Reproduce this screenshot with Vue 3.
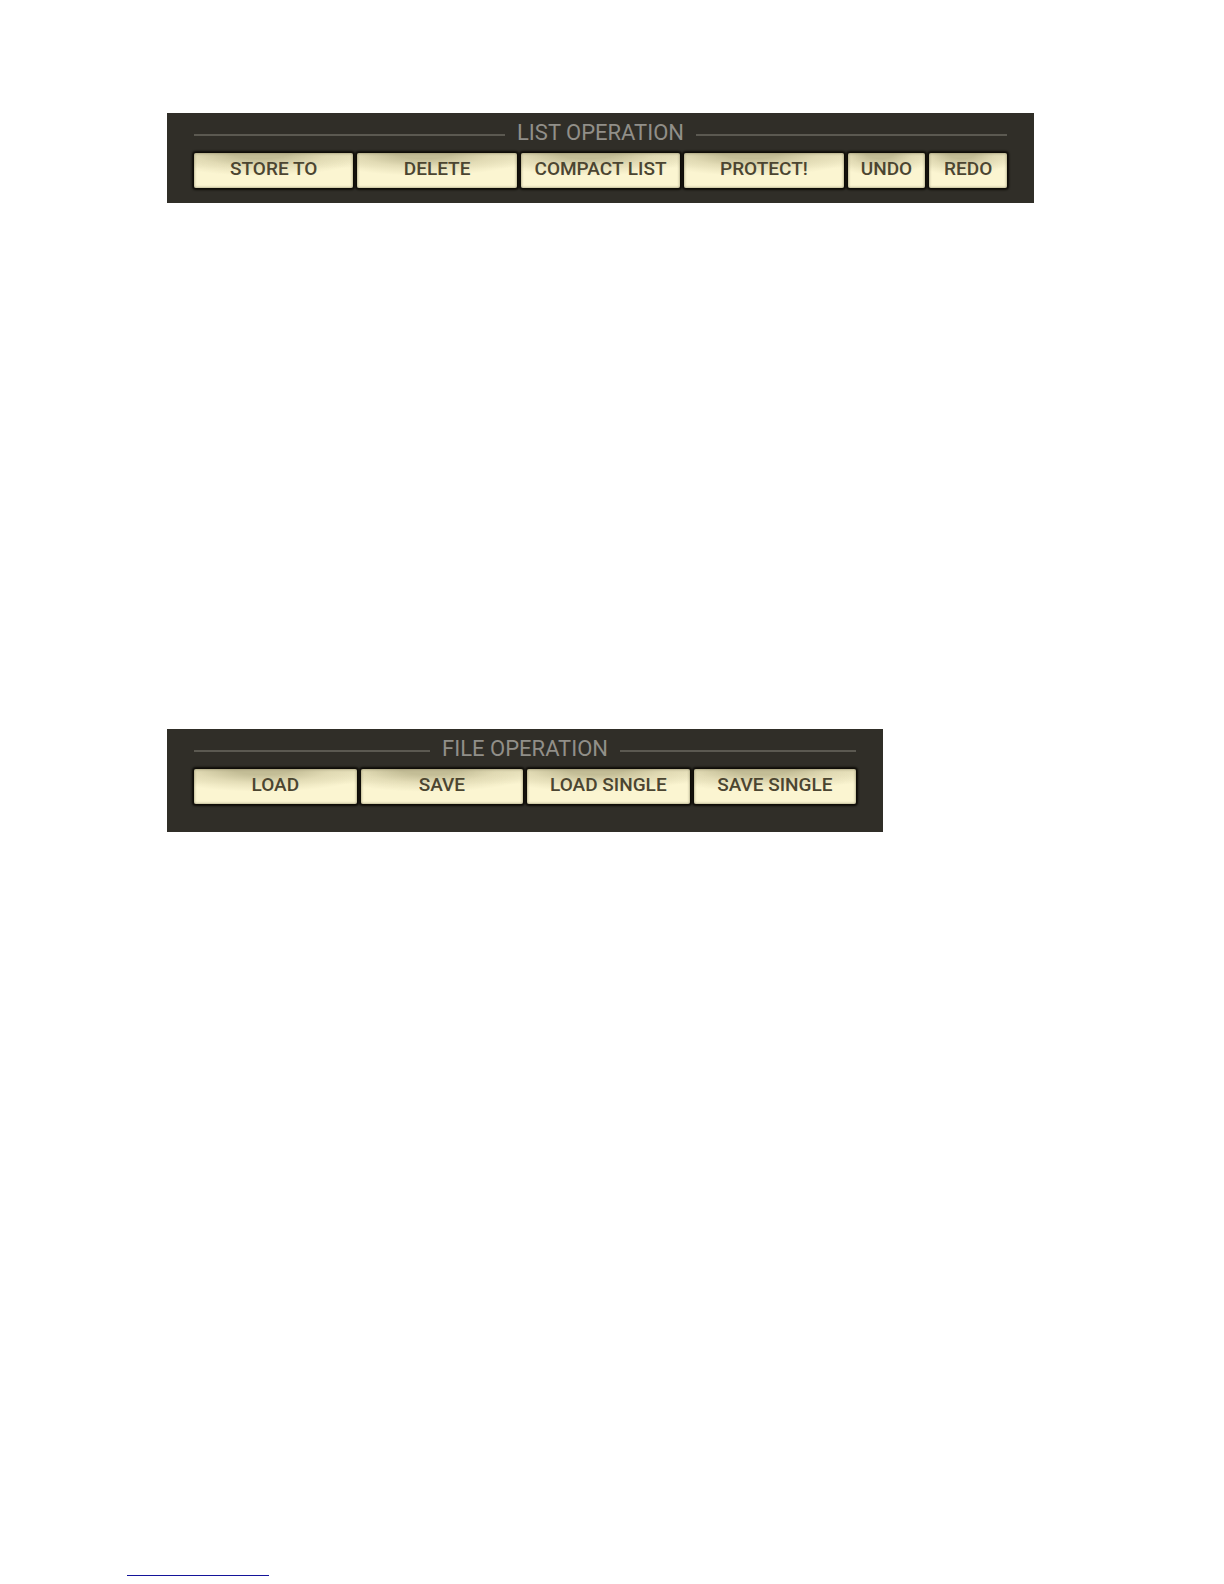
<template>
  <main class="page">
    <section
      v-for="panel in panels"
      :key="panel.id"
      class="panel"
      :class="panel.id"
      :aria-labelledby="`${panel.id}-title`"
    >
      <header class="panel-header">
        <span class="rule" aria-hidden="true"></span>
        <h2 :id="`${panel.id}-title`">{{ panel.title }}</h2>
        <span class="rule" aria-hidden="true"></span>
      </header>
      <div class="button-row">
        <button
          v-for="action in panel.actions"
          :key="action.label"
          type="button"
          class="key"
          :class="{ small: action.small }"
        >
          {{ action.label }}
        </button>
      </div>
    </section>

    <footer class="page-footer">
      <div class="footer-line"></div>
    </footer>
  </main>
</template>

<script setup>
const panels = [
  {
    id: 'list-operation',
    title: 'LIST OPERATION',
    actions: [
      { label: 'STORE TO' },
      { label: 'DELETE' },
      { label: 'COMPACT LIST' },
      { label: 'PROTECT!' },
      { label: 'UNDO', small: true },
      { label: 'REDO', small: true },
    ],
  },
  {
    id: 'file-operation',
    title: 'FILE OPERATION',
    actions: [
      { label: 'LOAD' },
      { label: 'SAVE' },
      { label: 'LOAD SINGLE' },
      { label: 'SAVE SINGLE' },
    ],
  },
]
</script>

<style>
body {
  margin: 0;
  background: #fff;
}
</style>

<style scoped>
.page {
  box-sizing: border-box;
  min-height: 100vh;
  padding: 113px 190px 8px 167px;
  display: flex;
  flex-direction: column;
  font-family: Roboto, 'Liberation Sans', sans-serif;
}

.panel {
  box-sizing: border-box;
  padding: 8px 27px 15px;
  display: flex;
  flex-direction: column;
  gap: 4px;
  background: #302e28;
}

.file-operation {
  width: 82.6%;
  margin-top: 526px;
  padding-bottom: 28px;
}

.panel-header {
  display: flex;
  align-items: center;
  gap: 12px;
}

.rule {
  flex: 1;
  height: 2px;
  background: #5b5951;
}

h2 {
  margin: 0;
  padding-bottom: 4px;
  font-size: 22px;
  line-height: 24px;
  font-weight: 400;
  color: #918f89;
}

.button-row {
  display: grid;
  grid-template-columns: repeat(10, 1fr);
  gap: 4px;
}

.file-operation .button-row {
  grid-template-columns: repeat(8, 1fr);
}

.key {
  grid-column: span 2;
  min-width: 0;
  min-height: 35px;
  padding: 0 0 4px;
  border: 0;
  border-radius: 2px;
  background:
    radial-gradient(ellipse 70% 65% at 42% 0, #c3bd96 25%, rgba(219, 212, 173, 0.7) 60%, transparent 100%),
    linear-gradient(180deg, #e8e2bd, #fbf5d1 45%);
  box-shadow:
    inset 0 0 2px 1px rgba(139, 133, 99, 0.5),
    0 0 2px 2px #0e0c07;
  color: #4b4531;
  font-family: inherit;
  font-size: 19px;
  font-weight: 500;
  line-height: 24px;
  white-space: nowrap;
  cursor: pointer;
}

.key.small {
  grid-column: span 1;
}

.key:active {
  background: #e4dcb2;
}

.page-footer {
  margin-top: auto;
  margin-left: -40px;
}

.footer-line {
  width: 142px;
  height: 1px;
  background: #14149a;
}
</style>
